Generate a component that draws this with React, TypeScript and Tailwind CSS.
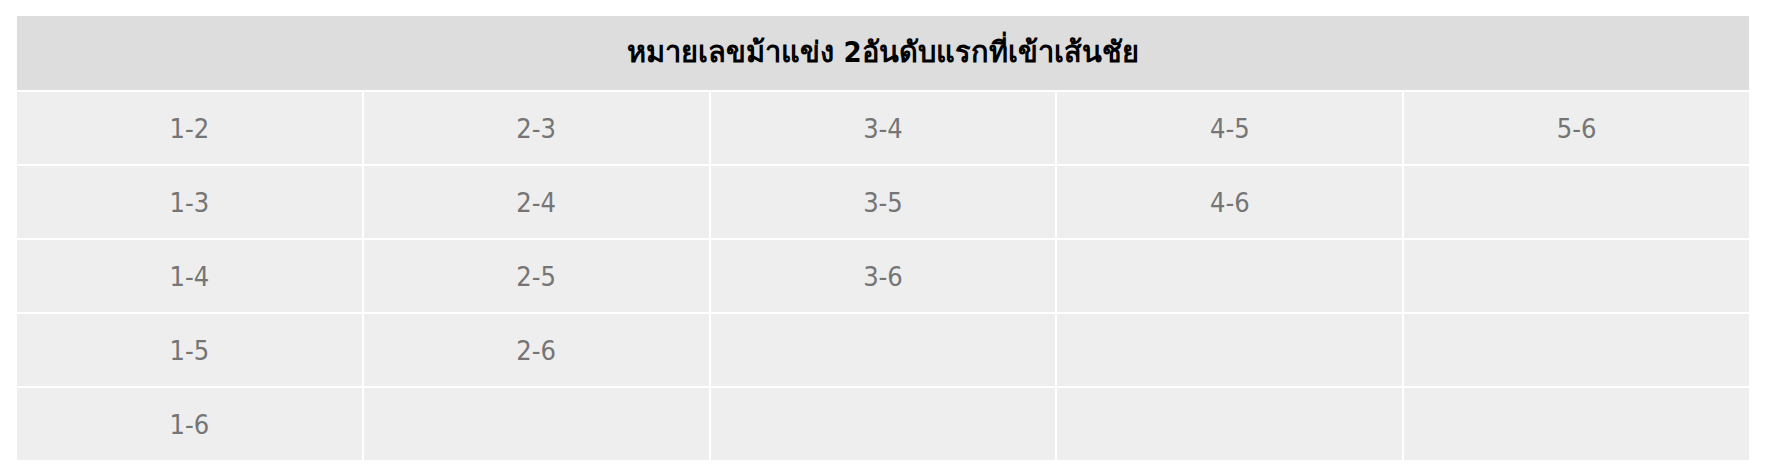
import React from 'react'

const rows = [
  ['1-2', '2-3', '3-4', '4-5', '5-6'],
  ['1-3', '2-4', '3-5', '4-6', ''],
  ['1-4', '2-5', '3-6', '', ''],
  ['1-5', '2-6', '', '', ''],
  ['1-6', '', '', '', ''],
]

export default function App() {
  return (
    <div className="min-h-screen bg-white pt-[16px] pl-[17px] font-['DejaVu_Sans_Condensed','DejaVu_Sans',sans-serif]">
      <div className="grid w-[1732px] grid-cols-5 gap-[2px] bg-white">
        <div className="col-span-5 flex h-[74px] items-center justify-center bg-[#dddddd] text-[29px] font-bold text-black">
          หมายเลขม้าแข่ง 2อันดับแรกที่เข้าเส้นชัย
        </div>
        {rows.flat().map((cell, i) => (
          <div
            key={i}
            className="flex h-[72px] items-center justify-center bg-[#eeeeee] pt-[2px] text-[27px] text-[#757575]"
          >
            {cell}
          </div>
        ))}
      </div>
    </div>
  )
}
